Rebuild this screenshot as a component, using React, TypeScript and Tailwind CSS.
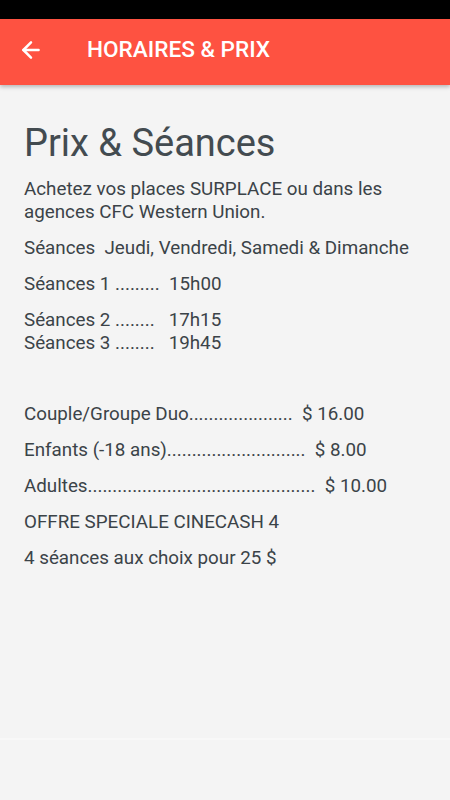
import { ArrowLeft } from "lucide-react"

export default function App() {
  return (
    <div className="w-[450px] h-[800px] flex flex-col bg-[#f4f4f4] overflow-hidden font-['Roboto',sans-serif]">
      <div className="h-[19px] bg-black shrink-0" />
      <header className="h-[66px] shrink-0 bg-[#fe5241] flex items-center pb-[4px] shadow-[0_2px_4px_rgba(0,0,0,0.25)] z-10">
        <div className="w-[87px] pl-[18px] flex items-center">
          <ArrowLeft className="w-[26px] h-[26px] text-white" strokeWidth={2.3} />
        </div>
        <h1 className="text-[22.6px] font-medium text-white">HORAIRES &amp; PRIX</h1>
      </header>
      <main className="flex-1 px-[24px] pt-[38px] text-[#3b4348] text-[18.8px] leading-[23px]">
        <h2 className="text-[38px] leading-[41px] text-[#434b50] mb-[14px]">Prix &amp; Séances</h2>
        <p>Achetez vos places SURPLACE ou dans les agences CFC Western Union.</p>
        <p className="mt-[13px] whitespace-pre">Séances  Jeudi, Vendredi, Samedi &amp; Dimanche</p>
        <p className="mt-[13px] whitespace-pre">Séances 1 .........  15h00</p>
        <p className="mt-[13px] whitespace-pre">
          Séances 2 ........   17h15
          <br />
          Séances 3 ........   19h45
        </p>
        <p className="mt-[48px] whitespace-pre">Couple/Groupe Duo.....................  $ 16.00</p>
        <p className="mt-[13px] whitespace-pre">Enfants (-18 ans)............................  $ 8.00</p>
        <p className="mt-[13px] whitespace-pre">Adultes..............................................  $ 10.00</p>
        <p className="mt-[13px]">OFFRE SPECIALE CINECASH 4</p>
        <p className="mt-[13px]">4 séances aux choix pour 25 $</p>
      </main>
      <div className="h-[62px] shrink-0 border-t-2 border-[#f8f8f8] bg-[#f4f4f4]" />
    </div>
  )
}
